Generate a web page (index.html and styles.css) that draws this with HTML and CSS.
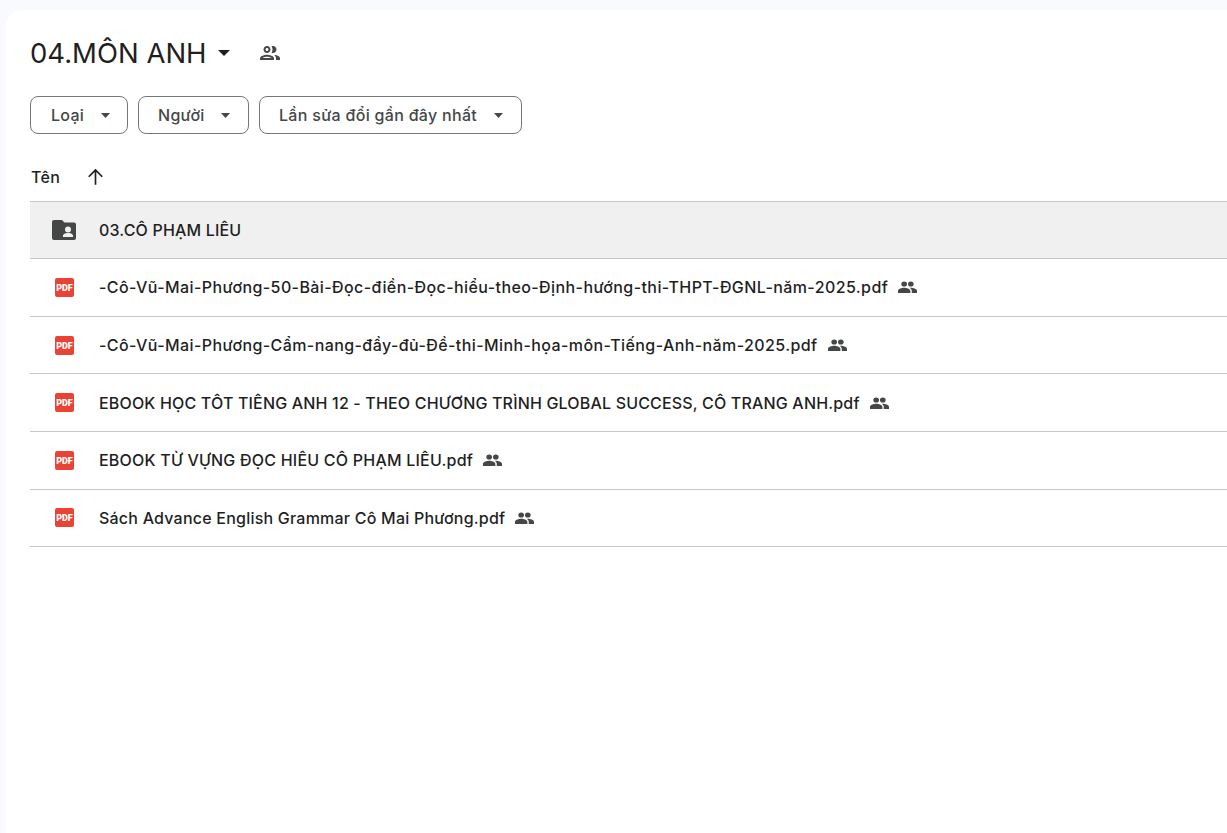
FILE: index.html
```html
<!DOCTYPE html>
<html lang="vi">
<head>
<meta charset="utf-8">
<title>04.MÔN ANH</title>
<link rel="stylesheet" href="styles.css">
</head>
<body>
<main class="card">
  <header class="title-row">
    <h1 class="title">04.MÔN ANH</h1>
    <svg class="title-caret" viewBox="0 0 10 5" width="12" height="6"><path d="M0 0h10L5 5z"/></svg>
    <svg class="title-people" viewBox="0 0 24 24" width="24" height="24"><path d="M9 13.750c-2.340 0-7 1.170-7 3.500V19h14v-1.750c0-2.330-4.660-3.500-7-3.500zM4.340 17c.84-.58 2.870-1.250 4.660-1.250s3.820.67 4.660 1.250H4.340zM9 12c1.930 0 3.500-1.570 3.500-3.500S10.930 5 9 5 5.500 6.570 5.500 8.500 7.070 12 9 12zm0-5c.83 0 1.500.67 1.500 1.500S9.830 10 9 10s-1.500-.67-1.500-1.500S8.170 7 9 7zm7.040 6.810c1.160.84 1.960 1.960 1.960 3.440V19h4v-1.750c0-2.020-3.500-3.170-5.960-3.440zM15 12c1.930 0 3.500-1.570 3.500-3.500S16.930 5 15 5c-.54 0-1.040.13-1.500.35.63.89 1 1.980 1 3.150s-.37 2.260-1 3.150c.46.22.96.35 1.500.35z"/></svg>
  </header>
  <div class="filters">
    <button class="chip chip-type">Loại<svg class="chip-caret" viewBox="0 0 10 5" width="9" height="5" preserveAspectRatio="none"><path d="M0 0h10L5 5z"/></svg></button>
    <button class="chip chip-people">Người<svg class="chip-caret" viewBox="0 0 10 5" width="9" height="5" preserveAspectRatio="none"><path d="M0 0h10L5 5z"/></svg></button>
    <button class="chip chip-date">Lần sửa đổi gần đây nhất<svg class="chip-caret" viewBox="0 0 10 5" width="9" height="5" preserveAspectRatio="none"><path d="M0 0h10L5 5z"/></svg></button>
  </div>
  <div class="list-head">
    <span class="head-name">Tên</span>
    <svg class="head-arrow" viewBox="0 0 16 16" width="19" height="19"><path d="M8 1.500 1.800 7.700l1 1L7.300 4.300V15h1.400V4.300l4.500 4.400 1-1z"/></svg>
  </div>
  <div class="list">
    <div class="row row-selected">
      <svg class="folder-icon" viewBox="0 0 24 20" width="24" height="20"><path fill-rule="evenodd" d="M2 0h8l2.500 2.500H22a2 2 0 0 1 2 2V18a2 2 0 0 1-2 2H2a2 2 0 0 1-2-2V2a2 2 0 0 1 2-2zM16 6.500a3 3 0 1 0 0 6 3 3 0 0 0 0-6zM11 15.500V17h10v-1.500c0-1.700-3.300-2.500-5-2.500s-5 .8-5 2.500z"/></svg>
      <span class="name">03.CÔ PHẠM LIÊU</span>
    </div>
    <div class="row">
      <svg class="pdf-icon" viewBox="0 0 19 19" width="19" height="19"><rect width="19" height="19" rx="2" fill="#ea4335"/><text class="pdf-text" x="9.500" y="12.800" text-anchor="middle">PDF</text></svg>
      <span class="name name-dashed">-Cô-Vũ-Mai-Phương-50-Bài-Đọc-điền-Đọc-hiểu-theo-Định-hướng-thi-THPT-ĐGNL-năm-2025.pdf</span>
      <svg class="shared-icon" viewBox="0 0 20 14" width="19" height="12" preserveAspectRatio="none"><path d="M6.500 6.500a3 3 0 1 0 0-6 3 3 0 0 0 0 6zm7 0a3 3 0 1 0 0-6 3 3 0 0 0 0 6zM6.500 8C4.200 8 0 9.200 0 11.300V14h13v-2.700C13 9.200 8.800 8 6.500 8zm7 0c-.3 0-.6 0-1 .1 1.200.8 2 1.900 2 3.200V14H20v-2.700C20 9.200 15.800 8 13.500 8z"/></svg>
    </div>
    <div class="row">
      <svg class="pdf-icon" viewBox="0 0 19 19" width="19" height="19"><rect width="19" height="19" rx="2" fill="#ea4335"/><text class="pdf-text" x="9.500" y="12.800" text-anchor="middle">PDF</text></svg>
      <span class="name name-dashed">-Cô-Vũ-Mai-Phương-Cẩm-nang-đầy-đủ-Đề-thi-Minh-họa-môn-Tiếng-Anh-năm-2025.pdf</span>
      <svg class="shared-icon" viewBox="0 0 20 14" width="19" height="12" preserveAspectRatio="none"><path d="M6.500 6.500a3 3 0 1 0 0-6 3 3 0 0 0 0 6zm7 0a3 3 0 1 0 0-6 3 3 0 0 0 0 6zM6.500 8C4.200 8 0 9.200 0 11.300V14h13v-2.700C13 9.200 8.800 8 6.500 8zm7 0c-.3 0-.6 0-1 .1 1.200.8 2 1.900 2 3.200V14H20v-2.700C20 9.200 15.800 8 13.500 8z"/></svg>
    </div>
    <div class="row">
      <svg class="pdf-icon" viewBox="0 0 19 19" width="19" height="19"><rect width="19" height="19" rx="2" fill="#ea4335"/><text class="pdf-text" x="9.500" y="12.800" text-anchor="middle">PDF</text></svg>
      <span class="name">EBOOK HỌC TÔT TIÊNG ANH 12 - THEO CHƯƠNG TRÌNH GLOBAL SUCCESS, CÔ TRANG ANH.pdf</span>
      <svg class="shared-icon" viewBox="0 0 20 14" width="19" height="12" preserveAspectRatio="none"><path d="M6.500 6.500a3 3 0 1 0 0-6 3 3 0 0 0 0 6zm7 0a3 3 0 1 0 0-6 3 3 0 0 0 0 6zM6.500 8C4.200 8 0 9.200 0 11.300V14h13v-2.700C13 9.200 8.800 8 6.500 8zm7 0c-.3 0-.6 0-1 .1 1.200.8 2 1.900 2 3.200V14H20v-2.700C20 9.200 15.800 8 13.500 8z"/></svg>
    </div>
    <div class="row">
      <svg class="pdf-icon" viewBox="0 0 19 19" width="19" height="19"><rect width="19" height="19" rx="2" fill="#ea4335"/><text class="pdf-text" x="9.500" y="12.800" text-anchor="middle">PDF</text></svg>
      <span class="name name-wide">EBOOK TỪ VỰNG ĐỌC HIÊU CÔ PHẠM LIÊU.pdf</span>
      <svg class="shared-icon" viewBox="0 0 20 14" width="19" height="12" preserveAspectRatio="none"><path d="M6.500 6.500a3 3 0 1 0 0-6 3 3 0 0 0 0 6zm7 0a3 3 0 1 0 0-6 3 3 0 0 0 0 6zM6.500 8C4.200 8 0 9.200 0 11.300V14h13v-2.700C13 9.200 8.800 8 6.500 8zm7 0c-.3 0-.6 0-1 .1 1.200.8 2 1.900 2 3.200V14H20v-2.700C20 9.200 15.800 8 13.500 8z"/></svg>
    </div>
    <div class="row">
      <svg class="pdf-icon" viewBox="0 0 19 19" width="19" height="19"><rect width="19" height="19" rx="2" fill="#ea4335"/><text class="pdf-text" x="9.500" y="12.800" text-anchor="middle">PDF</text></svg>
      <span class="name name-wide">Sách Advance English Grammar Cô Mai Phương.pdf</span>
      <svg class="shared-icon" viewBox="0 0 20 14" width="19" height="12" preserveAspectRatio="none"><path d="M6.500 6.500a3 3 0 1 0 0-6 3 3 0 0 0 0 6zm7 0a3 3 0 1 0 0-6 3 3 0 0 0 0 6zM6.500 8C4.200 8 0 9.200 0 11.300V14h13v-2.700C13 9.200 8.800 8 6.500 8zm7 0c-.3 0-.6 0-1 .1 1.200.8 2 1.900 2 3.200V14H20v-2.700C20 9.200 15.800 8 13.500 8z"/></svg>
    </div>
  </div>
</main>
</body>
</html>
```
FILE: styles.css
```css
* { box-sizing: border-box; }
html, body { height: 100%; }
body {
  margin: 0;
  background: #f8fafd;
  overflow: hidden;
  font-family: Inter, Roboto, sans-serif;
  color: #1f1f1f;
  padding: 10px 0 0 6px;
}
.card {
  background: #fff;
  border-radius: 16px 0 0 0;
  height: 100%;
  padding: 0 0 0 24px;
}
.title-row {
  display: flex;
  align-items: center;
  height: 86px;
}
.title {
  margin: 0;
  font-size: 27.500px;
  font-weight: 400;
  line-height: 36px;
}
.title-caret { fill: #1f1f1f; margin-left: 11px; }
.title-people { fill: #444746; margin-left: 28px; }
.filters { display: flex; gap: 10px; }
.chip {
  display: flex;
  align-items: center;
  justify-content: space-between;
  height: 38px;
  margin: 0;
  padding: 0 18px 0 19px;
  background: #fff;
  border: 1px solid #747775;
  border-radius: 8px;
  font-family: inherit;
  font-size: 16px;
  font-weight: 500;
  letter-spacing: .3px;
  color: #444746;
}
.chip-type { width: 98px; padding: 0 17px 0 20px; }
.chip-people { width: 111px; }
.chip-date { width: 263px; }
.chip-caret { fill: #444746; }
.list-head {
  display: flex;
  align-items: center;
  height: 66.600px;
  padding: 19px 0 0 1px;
  font-size: 16px;
  font-weight: 500;
  letter-spacing: .3px;
}
.head-arrow { fill: #1f1f1f; margin-left: 26px; }
.list { border-top: 1px solid #c7c7c7; }
.row {
  display: flex;
  align-items: center;
  height: 57.600px;
  padding-left: 25px;
  border-bottom: 1px solid #c7c7c7;
}
.row-selected { background: #f0f0f0; padding-left: 22px; }
.folder-icon { fill: #444746; margin-right: 23px; }
.pdf-icon { margin-right: 25px; flex: none; }
.pdf-text {
  font-family: Roboto, sans-serif;
  font-size: 9px;
  font-weight: 900;
  fill: #fff;
}
.name {
  font-size: 16px;
  font-weight: 500;
  letter-spacing: .17px;
  color: #1f1f1f;
  white-space: nowrap;
}
.name-dashed { letter-spacing: .41px; }
.name-wide { letter-spacing: .22px; }
.shared-icon { fill: #444746; margin-left: 10px; flex: none; }
```
